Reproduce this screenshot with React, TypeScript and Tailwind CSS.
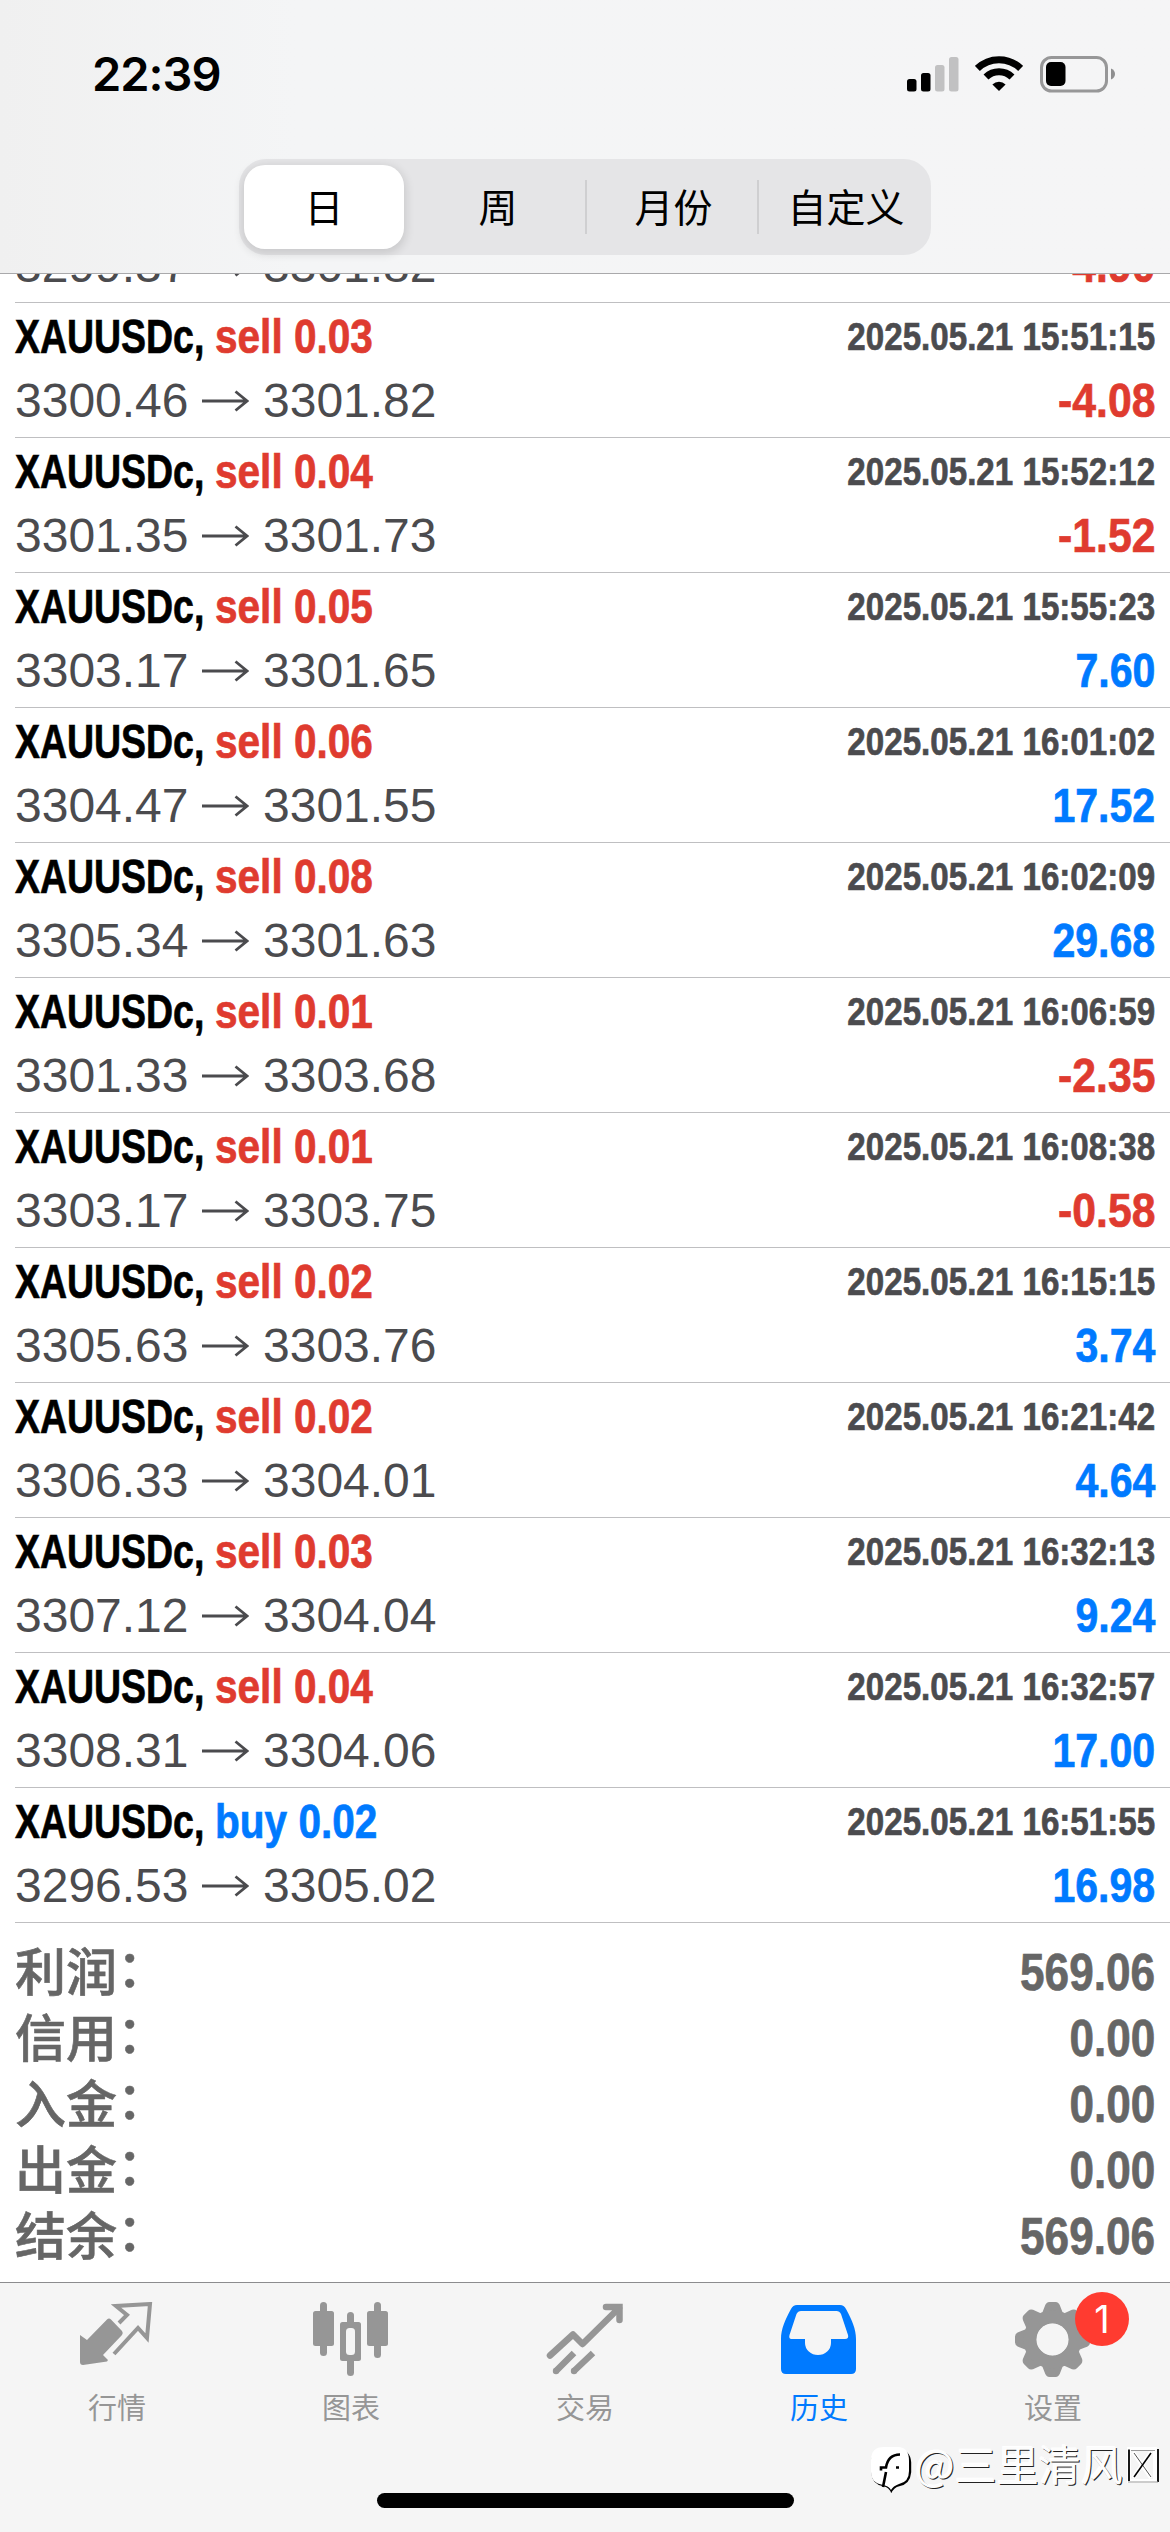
import type { ReactNode } from "react";

const NUM = "font-['Liberation_Sans',Arial,sans-serif]";
const CJK = "font-['Noto_Sans_CJK_SC',sans-serif]";
const HEAVY = "font-bold [-webkit-text-stroke:0.7px_currentColor]";

type Deal = {
  side: "sell" | "buy";
  lot: string;
  time: string;
  open: string;
  close: string;
  profit: string;
};

const d = (side: "sell" | "buy", lot: string, time: string, open: string, close: string, profit: string): Deal => ({
  side, lot, time, open, close, profit,
});

const deals: Deal[] = [
  d("sell", "0.03", "15:51:15", "3300.46", "3301.82", "-4.08"),
  d("sell", "0.04", "15:52:12", "3301.35", "3301.73", "-1.52"),
  d("sell", "0.05", "15:55:23", "3303.17", "3301.65", "7.60"),
  d("sell", "0.06", "16:01:02", "3304.47", "3301.55", "17.52"),
  d("sell", "0.08", "16:02:09", "3305.34", "3301.63", "29.68"),
  d("sell", "0.01", "16:06:59", "3301.33", "3303.68", "-2.35"),
  d("sell", "0.01", "16:08:38", "3303.17", "3303.75", "-0.58"),
  d("sell", "0.02", "16:15:15", "3305.63", "3303.76", "3.74"),
  d("sell", "0.02", "16:21:42", "3306.33", "3304.01", "4.64"),
  d("sell", "0.03", "16:32:13", "3307.12", "3304.04", "9.24"),
  d("sell", "0.04", "16:32:57", "3308.31", "3304.06", "17.00"),
  d("buy", "0.02", "16:51:55", "3296.53", "3305.02", "16.98"),
];

const summary: [string, string][] = [
  ["利润", "569.06"],
  ["信用", "0.00"],
  ["入金", "0.00"],
  ["出金", "0.00"],
  ["结余", "569.06"],
];

function StatusBar() {
  return (
    <div className="flex h-[159px] items-start justify-between pl-[92px] pr-[54px]">
      <span className="mt-[45px] font-['Inter',sans-serif] text-[47px] font-semibold leading-[58px] tracking-[-1px] text-black">22:39</span>
      <div className="mt-[55px] flex items-start">
        <svg width="52" height="37" viewBox="0 0 52 37">
          <rect x="0" y="24" width="9.5" height="12.5" rx="2.5" fill="#000" />
          <rect x="14" y="18" width="9.5" height="18.5" rx="2.5" fill="#000" />
          <rect x="28" y="10" width="9.5" height="26.5" rx="2.5" fill="#c1c1c2" />
          <rect x="42" y="2" width="9.5" height="34.5" rx="2.5" fill="#c1c1c2" />
        </svg>
        <svg className="ml-4" width="48" height="37" viewBox="0 0 48 37">
          <g fill="none" stroke="#000" strokeWidth="7">
            <path d="M2.4 13.4a31 31 0 0 1 43.2 0" />
            <path d="M11 22a18.5 18.5 0 0 1 26 0" />
          </g>
          <path d="M24 36l-6.6-6.6a9.4 9.4 0 0 1 13.2 0z" fill="#000" />
        </svg>
        <svg className="ml-[17px]" width="76" height="38" viewBox="0 0 76 38">
          <rect x="1.5" y="2.5" width="65" height="33.5" rx="10" fill="none" stroke="#979798" strokeWidth="3" />
          <rect x="6" y="7" width="19.5" height="24" rx="5" fill="#000" />
          <path d="M71 13.5c3 1.3 4 3.4 4 5.500s-1 4.200-4 5.500z" fill="#8f8f90" />
        </svg>
      </div>
    </div>
  );
}

function Segments() {
  return (
    <div className={`mx-auto grid h-24 w-[692px] grid-cols-[172px_174px_174px_172px] rounded-[27px] bg-[#e5e5e7] text-[39px] leading-[54px] text-black ${CJK}`}>
      <div className="flex py-[6px] pl-[5px] pr-[7px]">
        <div className="flex flex-1 items-center justify-center rounded-[21px] bg-white pb-[4px] shadow-[0_3px_10px_2px_rgba(0,0,0,0.12)]">日</div>
      </div>
      <div className="flex items-center justify-center pb-[4px]">周</div>
      <div className="flex items-center justify-center">
        <div className="h-[54px] w-[2px] bg-[#cfcfd1]" />
        <div className="flex-1 pb-[4px] pl-[3px] text-center">月份</div>
        <div className="h-[54px] w-[2px] bg-[#cfcfd1]" />
      </div>
      <div className="flex items-center justify-center pb-[4px] pl-[2px]">自定义</div>
    </div>
  );
}

function PriceLine({ open, close, profit }: { open: string; close: string; profit: string }) {
  return (
    <div className={`flex h-[62px] shrink-0 items-center justify-between text-[48px] ${NUM}`}>
      <div className="flex items-center text-[#4b4b4e]">
        <span className="w-[187px]">{open}</span>
        <svg className="mr-[14px]" width="47" height="24" viewBox="0 0 47 24" fill="none" stroke="#4b4b4e" strokeWidth="2.800">
          <path d="M0 12H45M33.500 2.500L45 12L33.500 21.500" />
        </svg>
        <span>{close}</span>
      </div>
      <span
        className={
          profit.startsWith("-")
            ? `origin-right scale-x-[0.89] text-[#df3b2f] ${HEAVY}`
            : `origin-right scale-x-[0.855] text-[#007aff] ${HEAVY}`
        }
      >
        {profit}
      </span>
    </div>
  );
}

function DealRow({ deal }: { deal: Deal }) {
  return (
    <div className={`ml-[15px] flex h-[135px] shrink-0 flex-col border-b border-[#bfbfc1] pr-[15px] pt-[3px] ${NUM}`}>
      <div className="mb-[2px] flex h-[62px] items-center justify-between">
        <div className={`flex items-center whitespace-pre text-[48px] ${HEAVY}`}>
          <span className="w-[200px] origin-left scale-x-[0.78] text-black">XAUUSDc,</span>
          <span className={deal.side === "sell" ? "origin-left scale-x-[0.845] text-[#df3b2f]" : "origin-left scale-x-[0.845] text-[#007aff]"}>
            {deal.side} {deal.lot}
          </span>
        </div>
        <span className={`origin-right scale-x-[0.85] whitespace-pre text-[39px] text-[#4b4b4e] ${HEAVY}`}>2025.05.21 {deal.time}</span>
      </div>
      <PriceLine open={deal.open} close={deal.close} profit={deal.profit} />
    </div>
  );
}

function Tab({ label, active, children }: { label: string; active?: boolean; children: ReactNode }) {
  return (
    <div className={active ? "flex flex-1 flex-col items-center text-[#007aff]" : "flex flex-1 flex-col items-center text-[#969696]"}>
      <div className="relative mt-[19px] h-[78px] w-[78px]">{children}</div>
      <span className={`mt-[4px] text-[29px] leading-[44px] ${CJK}`}>{label}</span>
    </div>
  );
}

function QuotesIcon() {
  return (
    <svg width="78" height="78" viewBox="0 0 78 78" fill="currentColor">
      <path d="M2 33l7 5L29 17.500q2-2 4 0L44 29q1.500 2 0 4L25 53l5 5-1 1.500L5 63q-3 0-3-3z" />
      <path d="M41 21l8-8-11-9 34-2-3 34-9-10-24 26" fill="none" stroke="currentColor" strokeWidth="4" />
    </svg>
  );
}

function ChartIcon() {
  return (
    <svg width="78" height="78" viewBox="0 0 78 78" fill="currentColor">
      <rect x="8" y="0" width="7" height="54" rx="3.500" />
      <rect x="1" y="9" width="21" height="35" rx="2.500" />
      <rect x="62" y="0" width="7" height="56" rx="3.500" />
      <rect x="55" y="9" width="21" height="35" rx="2.500" />
      <rect x="35" y="10" width="7" height="64" rx="3.500" />
      <rect x="28" y="20" width="21" height="39" rx="2.500" />
      <rect x="34" y="26" width="9" height="27" rx="3.500" fill="#f5f5f5" />
    </svg>
  );
}

function TradeIcon() {
  return (
    <svg width="78" height="78" viewBox="0 0 78 78" fill="none" stroke="currentColor" strokeWidth="6.500">
      <path d="M4 53.500L27 32.500L36.500 42L73 6" strokeLinecap="round" strokeLinejoin="round" />
      <path d="M60 5H73.500V18" strokeLinecap="round" />
      <path d="M64 5h9.500v9z" fill="currentColor" strokeWidth="2" />
      <path d="M10 69L28 51M28 69L47 51" />
      <circle cx="10" cy="69" r="3.200" fill="currentColor" stroke="none" />
      <circle cx="28" cy="69" r="3.200" fill="currentColor" stroke="none" />
    </svg>
  );
}

function HistoryIcon() {
  return (
    <svg width="78" height="78" viewBox="0 0 78 78" fill="currentColor">
      <path
        fillRule="evenodd"
        d="M17 3H60q4 0 6 4C72 18 76 27 76 37V67q0 5-5 5H6q-5 0-5-5V37C1 27 5 18 11 7q2-4 6-4zM21 9q-3 0-4.500 3L9.500 33q-1 4 2 4H25v4a13 12 0 0 0 26 0V37H65q4 0 3-4L61 12q-1.500-3-4.500-3z"
      />
    </svg>
  );
}

function GearIcon() {
  return (
    <svg width="78" height="78" viewBox="0 0 78 78" fill="currentColor">
      {[0, 45, 90, 135, 180, 225, 270, 315].map((a) => (
        <path key={a} transform={`rotate(${a} 38.500 37.500)`} d="M27 14l3.500-9q1.500-5 5-5h6q3.500 0 5 5L50 14z" />
      ))}
      <circle cx="38.500" cy="37.500" r="22.500" fill="none" stroke="currentColor" strokeWidth="13" />
      <circle cx="38.500" cy="37.500" r="15.700" fill="#f5f5f5" />
    </svg>
  );
}

function Watermark() {
  return (
    <div className={`absolute left-[869px] top-[2445px] flex h-[50px] items-start text-[#fdfdfd] ${CJK}`}>
      <svg width="46" height="50" viewBox="0 0 46 50">
        <path
          d="M15 4H29Q42 4 43 17V27Q42 39 31 41Q26 42 23 48Q21 42 15 41Q4 39 3 28V16Q4 4 15 4Z"
          transform="translate(-0.800 0.200)"
          fill="#000"
        />
        <path d="M15 2H29Q40 2 40 16V26Q40 37 30 39Q24 41 22 45Q20 41 14 40Q2 38 2 27V15Q2 2 15 2Z" fill="#fff" />
        <path d="M12 25.500V22.500H17Q19 9.500 31 9.500M27 22.500H30M17 27L14 42" fill="none" stroke="#000" strokeWidth="2.600" />
      </svg>
      <span className="mt-[-7px] text-[42px] leading-[50px] [text-shadow:1px_1px_0_#222,-1px_-1px_0_#fff]">@三里清风</span>
      <svg className="ml-[3px]" width="36" height="42" viewBox="0 0 36 42" fill="none">
        <path d="M3 4H29V36H3ZM7 7L25 33M25 7L7 33" stroke="#fff" strokeWidth="4" />
        <path d="M3 4.500V36M32 4V37" stroke="#000" strokeWidth="1.800" />
        <path d="M5 5.500H29M2 37H32" stroke="#999" strokeWidth="1.200" />
        <path d="M8 8L25 32" stroke="#555" strokeWidth="1" />
        <path d="M25 8L8 32" stroke="#000" strokeWidth="1.600" />
      </svg>
    </div>
  );
}

export default function App() {
  return (
    <div className="relative flex h-[2532px] w-[1170px] flex-col overflow-hidden bg-white">
      <header className="h-[274px] shrink-0 border-b border-[#a9a9ab] bg-linear-to-r from-[#f0f0f0] via-[#f4f5f6] via-25% to-[#f5f5f6]">
        <StatusBar />
        <Segments />
      </header>

      <main className="flex flex-1 flex-col">
        <div className="ml-[15px] flex h-[29px] shrink-0 flex-col justify-end overflow-hidden border-b border-[#bfbfc1] pb-[5px] pr-[15px]">
          <PriceLine open="3299.37" close="3301.82" profit="-4.90" />
        </div>
        {deals.map((deal) => (
          <DealRow key={deal.time} deal={deal} />
        ))}
        <div className="flex flex-col px-[15px] pt-[15px] text-[#666]">
          {summary.map(([name, value]) => (
            <div key={name} className="flex h-[66px] items-center justify-between">
              <span className={`flex pb-[4px] text-[51px] font-medium leading-[61px] [-webkit-text-stroke:0.6px_currentColor] ${CJK}`}>
                {name}
                <span className="-translate-y-[4px]">：</span>
              </span>
              <span className={`origin-right scale-x-[0.865] pt-[4px] text-[51px] leading-[62px] ${HEAVY} ${NUM}`}>{value}</span>
            </div>
          ))}
        </div>
      </main>

      <nav className="flex h-[250px] shrink-0 flex-col items-center border-t border-[#8c8c8e] bg-[#f5f5f5]">
        <div className="flex w-full flex-1">
          <Tab label="行情"><QuotesIcon /></Tab>
          <Tab label="图表"><ChartIcon /></Tab>
          <Tab label="交易"><TradeIcon /></Tab>
          <Tab label="历史" active><HistoryIcon /></Tab>
          <Tab label="设置">
            <GearIcon />
            <span className="absolute left-[61px] top-[-10px] flex h-[54px] w-[54px] items-center justify-center rounded-full bg-[#ff3b30] font-['Inter',sans-serif] text-[38px] text-white">1</span>
          </Tab>
        </div>
        <div className="mb-6 h-[15px] w-[417px] rounded-full bg-black" />
      </nav>
      <Watermark />
    </div>
  );
}
